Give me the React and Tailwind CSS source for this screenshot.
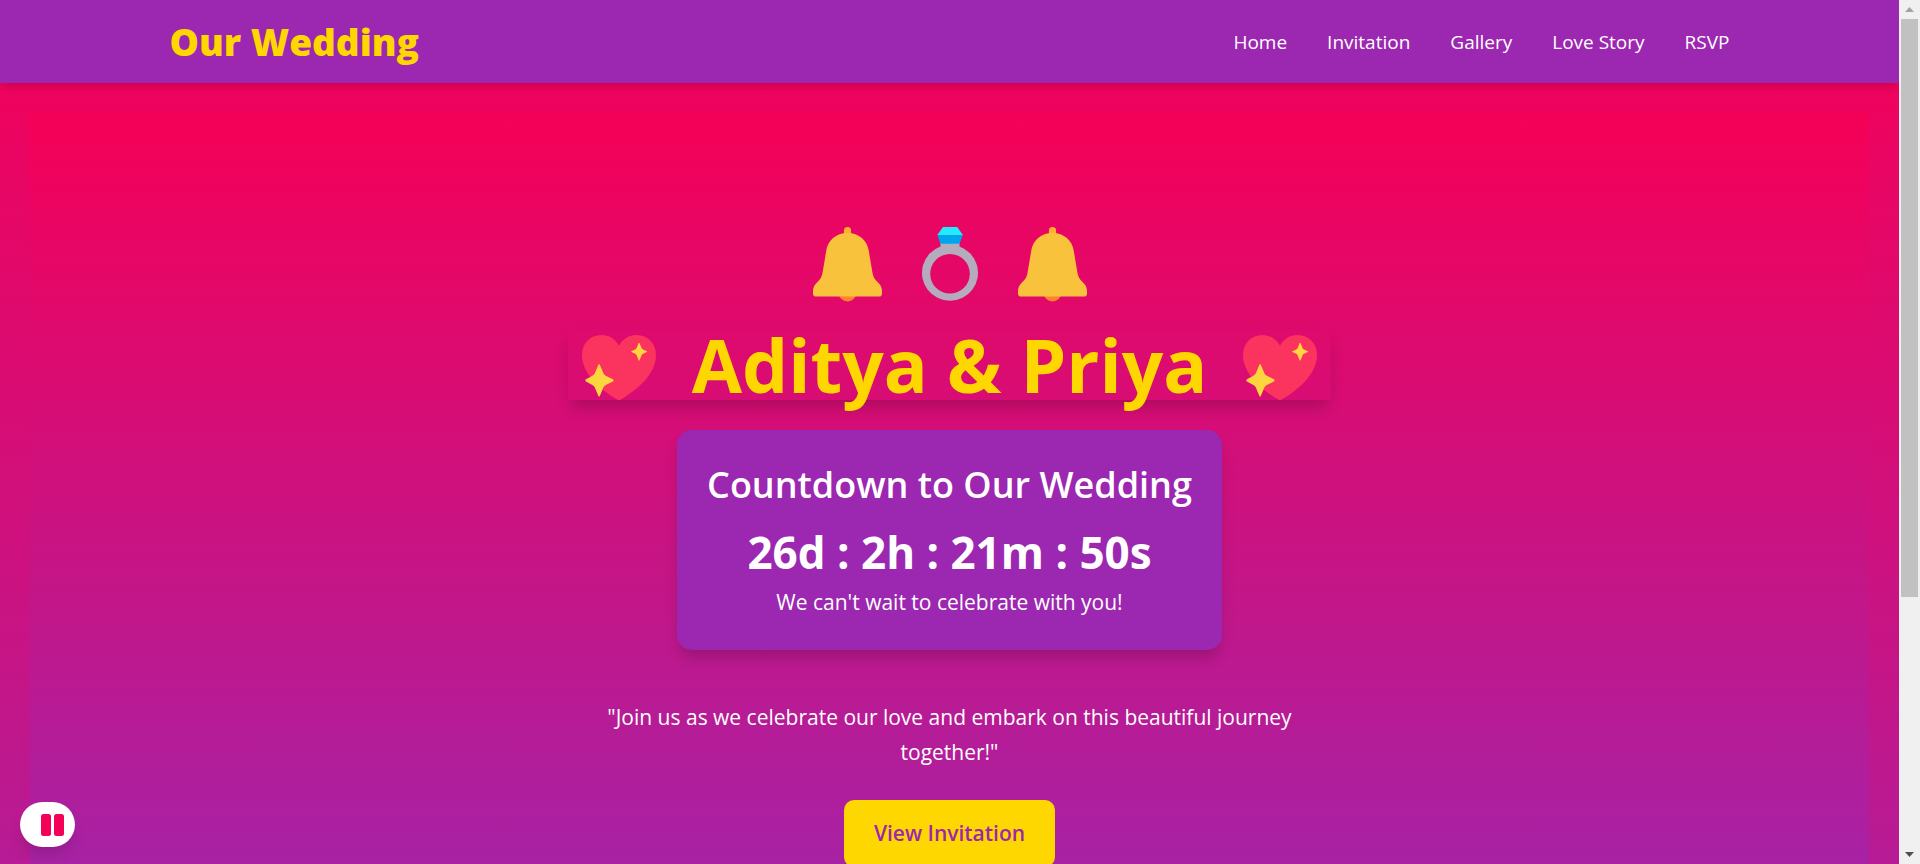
const links = ['Home', 'Invitation', 'Gallery', 'Love Story', 'RSVP'];

function Bell() {
  return (
    <svg className="h-[75px] w-[69px]" viewBox="0 0 69 75" aria-hidden="true">
      <path d="M34.500 0a3.600 3.600 0 0 1 3.600 3.600V9h-7.200V3.600A3.600 3.600 0 0 1 34.500 0z" fill="#ffb02e" />
      <circle cx="34.500" cy="65.500" r="9" fill="#ff822d" />
      <path d="M34.500 6C23 6 14.600 13.500 13.200 24L9.600 45.500C8.900 49.500 7.500 52.300 4.700 54.800 1.500 57.600 0 60.500 0 64v2.500C0 68.500 1 69.600 3 69.600h63c2 0 3-1.100 3-3.100V64c0-3.500-1.500-6.400-4.700-9.200-2.800-2.500-4.200-5.300-4.900-9.300L55.800 24C54.400 13.500 46 6 34.500 6z" fill="#f9c23c" />
    </svg>
  );
}

function Ring() {
  return (
    <svg className="h-[75px] w-[56px]" viewBox="0 0 56 75" aria-hidden="true">
      <path d="M18.500 15h19v4.500A28 28 0 1 1 18.500 19.500V15zM28 27a19.800 19.800 0 1 0 0 39.600 19.800 19.800 0 0 0 0-39.600z" fill="#b4acbc" />
      <path d="M15.300 7.800h25.600l-3.400 9h-19z" fill="#00a6ed" />
      <path d="M21 0h14.200l5.700 7.900H15.300z" fill="#26eafc" />
    </svg>
  );
}

function Heart() {
  return (
    <svg className="h-[65px] w-[74px] shrink-0" viewBox="0 0 74 65" aria-hidden="true">
      <path d="M37 10.500C33 4 27 0 19.500 0 8 0 0 8.500 0 20c0 18.500 18 35 37 45.500C56 55 74 38.500 74 20 74 8.500 66 0 54.500 0 47 0 41 4 37 10.500z" fill="#fb335f" />
      <path d="M17.600 29.200l3.900 9.300c.5 1 1.200 1.800 2.300 2.300l7.600 3.700v1.800l-7.600 3.700c-1.100.5-1.800 1.300-2.300 2.300l-3.900 9.300h-1l-3.900-9.300c-.5-1-1.200-1.800-2.300-2.300L3.500 46.300v-1.800l6.900-3.700c1.100-.5 1.800-1.300 2.300-2.300l3.900-9.300z" fill="#fcd53f" />
      <path d="M57.500 8l2.200 5.300c.3.600.7 1 1.300 1.300l3.900 1.600v.8L61 18.700c-.6.300-1 .7-1.300 1.300l-2.200 5.400h-.8L54.500 20c-.3-.6-.7-1-1.300-1.300L49.300 17v-.8l3.900-1.600c.6-.3 1-.7 1.300-1.300L56.700 8z" fill="#fcd53f" />
    </svg>
  );
}

function ScrollRail() {
  return (
    <div className="flex w-[21px] shrink-0 flex-col items-center justify-between bg-[#f0f0f0] px-[2px]" aria-hidden="true">
      <div className="flex h-[19px] shrink-0 items-center">
        <svg className="h-[5px] w-[9px]" viewBox="0 0 9 5"><path d="M4.500 0L9 5H0z" fill="#a3a3a3" /></svg>
      </div>
      <div className="flex w-full flex-1 flex-col">
        <div className="h-[70%] w-full bg-[#c1c1c1]" />
      </div>
      <div className="flex h-[19px] shrink-0 items-center">
        <svg className="h-[5px] w-[9px]" viewBox="0 0 9 5"><path d="M0 0h9L4.500 5z" fill="#505050" /></svg>
      </div>
    </div>
  );
}

export default function App() {
  return (
    <div className="flex h-screen font-['Open_Sans','Noto_Sans',sans-serif] text-white">
      <div className="min-w-0 flex-1 overflow-y-auto [scrollbar-width:none]">
        <div className="bg-[linear-gradient(#f50057,#9c27b0)] pb-[258px]">
          <header className="bg-[#9c27b0] px-6 shadow-[0_4px_10px_-2px_rgba(0,0,0,0.2)]">
            <div className="mx-auto flex h-[83px] max-w-[1560px] items-center justify-between">
              <a href="#home" className="text-[37px] leading-[54px] font-extrabold text-[#ffd700]">Our Wedding</a>
              <nav>
                <ul className="flex gap-10 text-[19px] leading-[30px]">
                  {links.map((label) => (
                    <li key={label}>
                      <a href={'#' + label.toLowerCase().replace(' ', '-')}>{label}</a>
                    </li>
                  ))}
                </ul>
              </nav>
            </div>
          </header>

          <main className="m-[30px] mb-0 flex min-h-screen flex-col items-center justify-center bg-[linear-gradient(#f50057,#9c27b0)] pb-[2px] text-center">
            <div className="flex h-20 items-end gap-10">
              <Bell />
              <Ring />
              <Bell />
            </div>
            <h1 className="mt-7 flex items-end gap-9 px-[14px] text-[73px] leading-[70px] font-bold text-[#ffd700] shadow-[0_10px_15px_-3px_rgba(0,0,0,0.2)]">
              <Heart />
              <span>Aditya &amp; Priya</span>
              <Heart />
            </h1>
            <section className="mt-[30px] rounded-[15px] bg-[#9c27b0] p-[30px] shadow-[0_10px_15px_-3px_rgba(0,0,0,0.2)]">
              <h2 className="text-[36px] leading-[49px] font-semibold">Countdown to Our Wedding</h2>
              <p className="mt-[14px] text-[44px] leading-[59px] font-bold">26d : 2h : 21m : 50s</p>
              <p className="mt-[3px] text-[21px] leading-[35px]">We can't wait to celebrate with you!</p>
            </section>
            <p className="mt-[50px] max-w-[700px] text-[21px] leading-[35px]">
              "Join us as we celebrate our love and embark on this beautiful journey together!"
            </p>
            <a href="#invitation" className="mt-[30px] rounded-[10px] bg-[#ffd700] px-[30px] py-4 text-[21px] leading-[35px] font-semibold text-[#9c27b0]">
              View Invitation
            </a>
          </main>
        </div>
        <button
          type="button"
          aria-label="Pause music"
          className="fixed bottom-[17px] left-5 flex h-[45px] w-[55px] items-center justify-end rounded-full bg-white pr-[11px] shadow-[0_10px_15px_-3px_rgba(0,0,0,0.15)]"
        >
          <svg className="h-[22px] w-[23px]" viewBox="0 0 23 22" fill="#f50057" aria-hidden="true">
            <rect width="10" height="22" rx="2.500" />
            <rect x="13" width="10" height="22" rx="2.500" />
          </svg>
        </button>
      </div>
      <ScrollRail />
    </div>
  );
}
